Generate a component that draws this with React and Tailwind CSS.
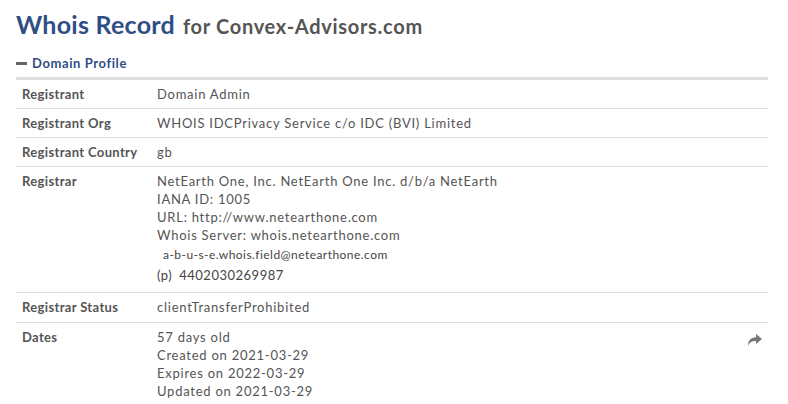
import React from 'react';

const rows = [
  { label: 'Registrant', lines: ['Domain Admin'] },
  { label: 'Registrant Org', lines: ['WHOIS IDCPrivacy Service c/o IDC (BVI) Limited'] },
  { label: 'Registrant Country', lines: ['gb'] },
  { label: 'Registrar', registrar: true },
  { label: 'Registrar Status', lines: ['clientTransferProhibited'], extra: 'pb-[6px]' },
  { label: 'Dates', share: true, lines: ['57 days old', 'Created on 2021-03-29', 'Expires on 2022-03-29', 'Updated on 2021-03-29'] },
];

const ShareIcon = () => (
  <svg width="15" height="12" viewBox="0 0 15 12" className="text-[#777]">
    <path d="M9 0 L15 5 L9 10 L9 7 C5 7 2.5 8 1 12 C1 6 4 3.5 9 3.2 Z" fill="currentColor" />
  </svg>
);

export default function App() {
  return (
    <div className="min-h-screen bg-white px-4 pt-[7px] font-['Lato','Liberation_Sans',sans-serif] text-[13px] text-[#444]">
      <h1 className="flex items-baseline gap-2 leading-[34px]">
        <span className="text-[25px] font-bold tracking-[0.25px] text-[#2f4e84]">Whois Record</span>
        <span className="text-[20px] font-bold tracking-[0.7px] text-[#555]">for Convex-Advisors.com</span>
      </h1>

      <div className="mt-[11px] flex items-center gap-[5px] pb-[3px] text-[13px] font-bold tracking-[0.6px] text-[#2f4e84]">
        <span className="inline-block h-[3px] w-[11px] bg-[#666]" />
        <span>Domain Profile</span>
      </div>

      <div className="w-[752px] border-t-[3px] border-[#ddd]">
        {rows.map((r) => (
          <div key={r.label} className={`flex border-b border-[#ddd] py-[5px] leading-[18px] ${r.extra || ''}`}>
            <div className="w-[141px] shrink-0 pl-[6px] font-bold tracking-[0.35px] text-[#555]">{r.label}</div>
            <div className="flex-1 tracking-[0.75px] text-[#555]">
              {r.registrar ? (
                <>
                  <div>NetEarth One, Inc. NetEarth One Inc. d/b/a NetEarth</div>
                  <div>IANA ID: 1005</div>
                  <div>URL: http://www.netearthone.com</div>
                  <div>Whois Server: whois.netearthone.com</div>
                  <div className="mt-[1px] pl-[6px] text-[12px] leading-[20px] tracking-[0.45px] text-[#444]">a-b-u-s-e.whois.field@netearthone.com</div>
                  <div className="mb-[2px] flex gap-[7px] leading-[20px] tracking-[0.5px] text-[#444]">
                    <span>(p)</span>
                    <span>4402030269987</span>
                  </div>
                </>
              ) : (
                r.lines.map((l) => <div key={l}>{l}</div>)
              )}
            </div>
            {r.share && (
              <div className="pr-[6px] pt-[6px]">
                <ShareIcon />
              </div>
            )}
          </div>
        ))}
      </div>
    </div>
  );
}
